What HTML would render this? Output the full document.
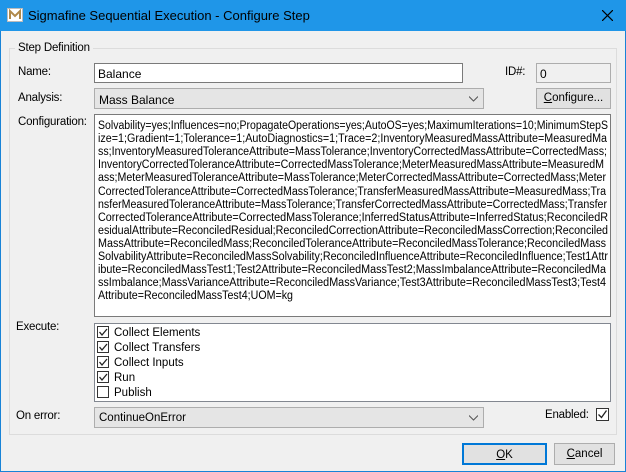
<!DOCTYPE html>
<html><head><meta charset="utf-8"><style>
*{box-sizing:border-box;margin:0;padding:0}
body{width:626px;height:472px;background:#f0f0f0;font-family:"Liberation Sans",sans-serif;font-size:12px;color:#000;position:relative;overflow:hidden}
.win{position:absolute;left:0;top:0;width:626px;height:472px;border:1px solid #1883d7}
.title{position:absolute;left:0;top:0;width:626px;height:31px;background:#1f96e8;}
.title span{position:absolute;left:28px;top:8px;font-size:13px;color:#000}
.a{position:absolute}
.lbl{position:absolute;font-size:11.5px;letter-spacing:-0.2px}
.inp{position:absolute;background:#fff;border:1px solid #7a7a7a}
.combo{position:absolute;background:#e5e5e5;border:1px solid #adadad}
.btn{position:absolute;background:#e1e1e1;border:1px solid #adadad;text-align:center;font-size:11.5px}
.cb{position:absolute;width:13px;height:13px;border:1px solid #333;background:#fff}
</style></head><body>
<div class="win"></div>
<div class="title"><span>Sigmafine Sequential Execution - Configure Step</span>
<svg class="a" style="left:7px;top:8px" width="16" height="14"><rect x="0.5" y="0.5" width="15" height="13" fill="#fff" stroke="#bbb"/><path d="M3 11V3l5 5 5-5v8" fill="none" stroke="#b0894a" stroke-width="2"/></svg>
<svg class="a" style="left:602px;top:10px" width="11" height="11"><path d="M0 0L11 11M11 0L0 11" stroke="#000" stroke-width="1.2"/></svg>
</div>
<div class="a" style="left:9px;top:48px;width:608px;height:387px;border:1px solid #dcdcdc"></div>
<div class="lbl" style="left:15px;top:42px;background:#f0f0f0;padding:0 3px">Step Definition</div>
<div class="lbl" style="left:18px;top:66px">Name:</div>
<div class="inp" style="left:94px;top:63px;width:369px;height:20px"><span class="a" style="left:3px;top:3px">Balance</span></div>
<div class="lbl" style="left:505px;top:66px">ID#:</div>
<div class="inp" style="left:536px;top:63px;width:75px;height:20px;background:#f0f0f0;border-color:#adadad"><span class="a" style="left:3px;top:3px">0</span></div>
<div class="lbl" style="left:18px;top:92px">Analysis:</div>
<div class="combo" style="left:94px;top:88px;width:390px;height:21px"><span class="a" style="left:4px;top:4px">Mass Balance</span>
<svg class="a" style="left:374px;top:7px" width="9" height="6"><path d="M0 0.5L4.5 5 9 0.5" fill="none" stroke="#555"/></svg></div>
<div class="btn" style="left:536px;top:88px;width:75px;height:21px;line-height:19px"><u>C</u>onfigure...</div>
<div class="lbl" style="left:18px;top:116px">Configuration:</div>
<div class="inp" style="left:94px;top:114px;width:517px;height:203px;border-color:#7a7a7a"></div>
<svg class="a" style="left:0;top:0" width="626" height="320" font-family="Liberation Sans" font-size="11.5">
<g fill="#000">
<text x="98" y="129" textLength="510" lengthAdjust="spacingAndGlyphs">Solvability=yes;Influences=no;PropagateOperations=yes;AutoOS=yes;MaximumIterations=10;MinimumStepS</text>
<text x="98" y="142" textLength="509" lengthAdjust="spacingAndGlyphs">ize=1;Gradient=1;Tolerance=1;AutoDiagnostics=1;Trace=2;InventoryMeasuredMassAttribute=MeasuredMa</text>
<text x="98" y="155" textLength="509" lengthAdjust="spacingAndGlyphs">ss;InventoryMeasuredToleranceAttribute=MassTolerance;InventoryCorrectedMassAttribute=CorrectedMass;</text>
<text x="98" y="168" textLength="506" lengthAdjust="spacingAndGlyphs">InventoryCorrectedToleranceAttribute=CorrectedMassTolerance;MeterMeasuredMassAttribute=MeasuredM</text>
<text x="98" y="181" textLength="508" lengthAdjust="spacingAndGlyphs">ass;MeterMeasuredToleranceAttribute=MassTolerance;MeterCorrectedMassAttribute=CorrectedMass;Meter</text>
<text x="98" y="195" textLength="508" lengthAdjust="spacingAndGlyphs">CorrectedToleranceAttribute=CorrectedMassTolerance;TransferMeasuredMassAttribute=MeasuredMass;Tra</text>
<text x="98" y="208" textLength="509" lengthAdjust="spacingAndGlyphs">nsferMeasuredToleranceAttribute=MassTolerance;TransferCorrectedMassAttribute=CorrectedMass;Transfer</text>
<text x="98" y="221" textLength="510" lengthAdjust="spacingAndGlyphs">CorrectedToleranceAttribute=CorrectedMassTolerance;InferredStatusAttribute=InferredStatus;ReconciledR</text>
<text x="98" y="234" textLength="510" lengthAdjust="spacingAndGlyphs">esidualAttribute=ReconciledResidual;ReconciledCorrectionAttribute=ReconciledMassCorrection;Reconciled</text>
<text x="98" y="247" textLength="508" lengthAdjust="spacingAndGlyphs">MassAttribute=ReconciledMass;ReconciledToleranceAttribute=ReconciledMassTolerance;ReconciledMass</text>
<text x="98" y="260" textLength="510" lengthAdjust="spacingAndGlyphs">SolvabilityAttribute=ReconciledMassSolvability;ReconciledInfluenceAttribute=ReconciledInfluence;Test1Attr</text>
<text x="98" y="273" textLength="508" lengthAdjust="spacingAndGlyphs">ibute=ReconciledMassTest1;Test2Attribute=ReconciledMassTest2;MassImbalanceAttribute=ReconciledMa</text>
<text x="98" y="286" textLength="508" lengthAdjust="spacingAndGlyphs">ssImbalance;MassVarianceAttribute=ReconciledMassVariance;Test3Attribute=ReconciledMassTest3;Test4</text>
<text x="98" y="299" textLength="195" lengthAdjust="spacingAndGlyphs">Attribute=ReconciledMassTest4;UOM=kg</text>
</g></svg>
<div class="lbl" style="left:16px;top:321px">Execute:</div>
<div class="inp" style="left:94px;top:323px;width:517px;height:79px;border-color:#828790"></div>
<svg class="a" style="left:96px;top:325px" width="200" height="76" font-family="Liberation Sans" font-size="11.5">
<g fill="#fff" stroke="#333"><rect x="1.5" y="1.5" width="11" height="11"/><rect x="1.5" y="16.5" width="11" height="11"/><rect x="1.5" y="31.5" width="11" height="11"/><rect x="1.5" y="46.5" width="11" height="11"/><rect x="1.5" y="61.5" width="11" height="11"/></g>
<g fill="none" stroke="#222" stroke-width="1.3"><path d="M3.5 7l2.5 3 5-6"/><path d="M3.5 22l2.5 3 5-6"/><path d="M3.5 37l2.5 3 5-6"/><path d="M3.5 52l2.5 3 5-6"/></g>
<text x="18" y="11">Collect Elements</text><text x="18" y="26">Collect Transfers</text><text x="18" y="41">Collect Inputs</text><text x="18" y="56">Run</text><text x="18" y="71">Publish</text>
</svg>
<div class="lbl" style="left:16px;top:410px">On error:</div>
<div class="combo" style="left:79px;top:407px;width:324px;height:1px;display:none"></div>
<div class="combo" style="left:94px;top:407px;width:390px;height:21px"><span class="a" style="left:4px;top:4px;font-size:11.5px">ContinueOnError</span>
<svg class="a" style="left:374px;top:7px" width="9" height="6"><path d="M0 0.5L4.5 5 9 0.5" fill="none" stroke="#555"/></svg></div>
<div class="lbl" style="left:545px;top:409px">Enabled:</div>
<svg class="a" style="left:596px;top:408px" width="14" height="14"><rect x="0.5" y="0.5" width="12" height="12" fill="#fff" stroke="#333"/><path d="M2.5 6.5l3 3 5-7" fill="none" stroke="#222" stroke-width="1.3"/></svg>
<div class="btn" style="left:462px;top:443px;width:85px;height:22px;line-height:20px;border:2px solid #0078d7"><u>O</u>K</div>
<div class="btn" style="left:554px;top:443px;width:61px;height:22px;line-height:20px"><u>C</u>ancel</div>
</body></html>
